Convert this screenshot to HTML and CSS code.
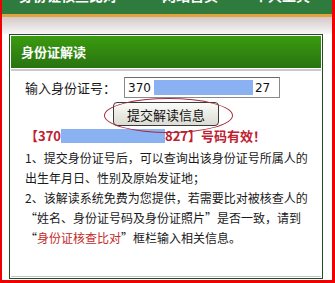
FILE: index.html
```html
<!DOCTYPE html>
<html lang="zh-CN">

<head>
    <meta charset="UTF-8">
    <meta name="viewport" content="width=device-width, initial-scale=1.0">
    <title>身份证解读</title>
    <link rel="stylesheet" href="styles.css">
</head>

<body>
    <div class="frame">
        <div class="topnav">
            <span class="nav-a">身份证核查比对</span>
            <span class="nav-b">网站首页</span>
            <span class="nav-c">个人工具</span>
            <span class="nav-d">帮</span>
        </div>
        <div class="shade"></div>

        <div class="panel">
            <div class="panel-head">身份证解读</div>
            <div class="panel-body">
                <div class="id-row">
                    <label class="id-label">输入身份证号：</label>
                    <div class="id-input">370<span class="mask mask-input"></span>27</div>
                </div>
                <div class="btn-row">
                    <button type="button" class="submit-btn">提交解读信息</button>
                    <span class="ring"></span>
                </div>
                <p class="result">【370<span class="mask mask-result"></span>827】号码有效！</p>
                <p class="note">1、提交身份证号后，可以查询出该身份证号所属人的<br>出生年月日、性别及原始发证地；</p>
                <p class="note">2、该解读系统免费为您提供，若需要比对被核查人的<br>“姓名、身份证号码及身份证照片”是否一致，请到<br>“<span class="link">身份证核查比对</span>”框栏输入相关信息。</p>
            </div>
        </div>
    </div>
</body>

</html>
```

FILE: styles.css
```css
body {
    margin: 0;
    padding: 0;
    background: #fff;
    font-family: "Noto Sans CJK SC", "Liberation Sans", sans-serif;
}

.frame {
    width: 335px;
    height: 283px;
    box-sizing: border-box;
    border-left: 2px solid #f00000;
    border-right: 3px solid #f00000;
    border-bottom: 3px solid #f00000;
    overflow: hidden;
    background: #fff;
}

/* top menu, only its lower edge is in view */
.topnav {
    height: 14px;
    background: #2f7b3d;
    border-bottom: 3px solid #e2a33c;
    overflow: hidden;
    display: flex;
    align-items: flex-start;
    color: #fff;
    font-size: 14px;
    font-weight: bold;
    line-height: 14px;
    white-space: nowrap;
}

.topnav span {
    margin-top: -12px;
}

.nav-a {
    margin-left: 17px;
}

.nav-b {
    margin-left: 45px;
}

.nav-c {
    margin-left: 36px;
}

.nav-d {
    margin-left: 29px;
}

.shade {
    height: 17px;
    background: linear-gradient(#d4c8c8, #f7f7f7);
}

.panel {
    margin: 0 9px 0 7px;
    border: 1px solid #1f4f1f;
    padding: 1px;
    background: #fff;
}

.panel-head {
    height: 32px;
    line-height: 32px;
    padding-left: 10px;
    background: linear-gradient(#3b9b10, #287310);
    color: #fff;
    font-size: 13px;
    font-weight: bold;
}

.panel-body {
    margin-top: 1px;
    height: 199px;
    border-top: 2px solid #cacaca;
    border-bottom: 1px solid #c4c4c4;
    padding: 6px 14px 0;
    color: #1a1a1a;
}

.id-row {
    display: flex;
    align-items: center;
}

.id-label {
    font-size: 13px;
    width: 99px;
}

.id-input {
    width: 151px;
    height: 19px;
    border: 1px solid #8a8a8a;
    border-top-color: #6a6a6a;
    padding-left: 3px;
    display: flex;
    align-items: center;
    font-family: "DejaVu Sans", sans-serif;
    font-size: 12px;
    color: #111;
}

.mask {
    display: inline-block;
    background: #8ab2f2;
}

.mask-input {
    width: 99px;
    height: 15px;
    margin: 0 2px 0 3px;
}

.btn-row {
    position: relative;
    display: flex;
    justify-content: center;
    margin-top: 4px;
}

.submit-btn {
    width: 106px;
    height: 24px;
    border: 1px solid #3a3a3a;
    border-radius: 4px;
    background: linear-gradient(#fbfbf8, #dcdcd4);
    font-family: "Noto Sans CJK SC", sans-serif;
    font-size: 13px;
    color: #111;
    padding: 0;
}

/* hand-drawn mark around the button */
.ring {
    position: absolute;
    left: 79px;
    top: -4px;
    width: 127px;
    height: 33px;
    border: 1px solid #a82a3c;
    border-radius: 50%;
}

.result {
    margin: 1px 0 3px;
    height: 18px;
    line-height: 18px;
    display: flex;
    align-items: center;
    color: #c02030;
    font-size: 13px;
    font-weight: bold;
    white-space: nowrap;
}

.mask-result {
    width: 104px;
    height: 14px;
}

.note {
    margin: 0;
    font-size: 12px;
    line-height: 20px;
    white-space: nowrap;
}

.link {
    color: #c42a2a;
}
```
